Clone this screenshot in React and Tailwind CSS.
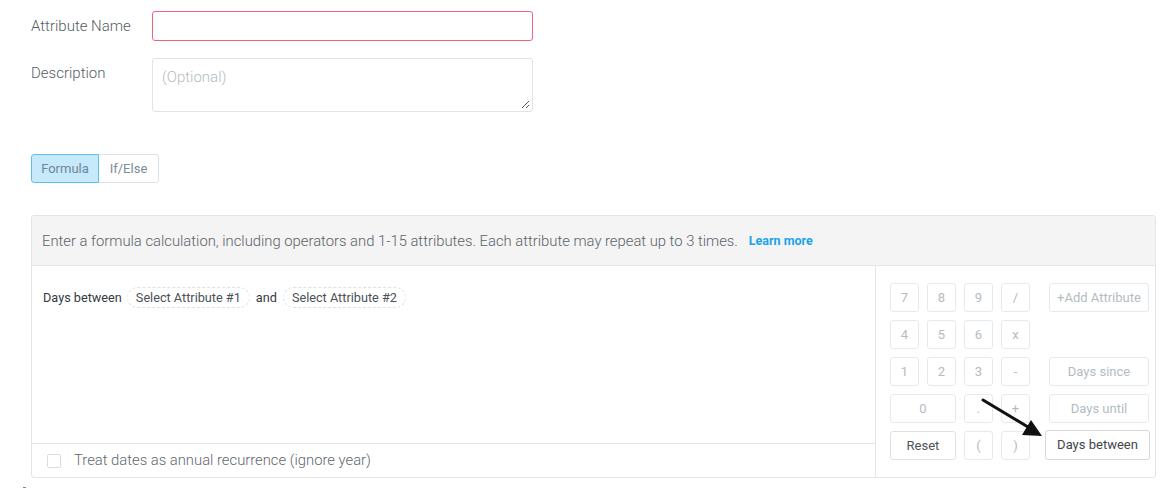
import React from "react";

const Key = ({ children, className = "", tone = "text-[#b4bcc2] border-[#e6eaec]" }) => (
  <div
    className={`h-[29px] flex items-center justify-center border rounded-[3px] text-[13px] ${tone} ${className}`}
  >
    {children}
  </div>
);

export default function App() {
  return (
    <div
      className="relative w-[1173px] h-[490px] bg-white overflow-hidden"
      style={{ fontFamily: "Roboto, 'Liberation Sans', sans-serif" }}
    >
      <div className="pl-[31px] pt-[11px]">
        {/* Attribute name */}
        <div className="flex items-center">
          <div className="w-[121px] text-[15px] font-light text-[#555d63]">Attribute Name</div>
          <div className="w-[381px] h-[30px] border border-[#f2627e] rounded-[3px]" />
        </div>
        {/* Description */}
        <div className="flex items-start mt-[17px]">
          <div className="w-[121px] text-[15px] font-light text-[#555d63] pt-[4px]">Description</div>
          <div className="relative w-[381px] h-[54px] border border-[#dfe4e6] rounded-[3px] px-[9px] pt-[7px] text-[15px] font-light text-[#b3bcc2]">
            (Optional)
            <svg className="absolute right-[2px] bottom-[2px]" width="9" height="9" viewBox="0 0 9 9">
              <path d="M8 1 L1 8 M8 5 L5 8" stroke="#555" strokeWidth="1" />
            </svg>
          </div>
        </div>
        {/* Tabs */}
        <div className="flex mt-[42px]">
          <div className="w-[68px] h-[29px] flex items-center justify-center bg-[#c6e9fc] border border-[#5ec0f2] rounded-l-[3px] text-[13px] text-[#6f8797]">
            Formula
          </div>
          <div className="w-[60px] h-[29px] flex items-center justify-center border border-l-0 border-[#dde4e8] rounded-r-[3px] text-[13px] text-[#7c8c98]">
            If/Else
          </div>
        </div>
        {/* Panel */}
        <div className="mt-[32px] w-[1125px] border border-[#e1e5e7] rounded-[3px]">
          <div className="h-[50px] bg-[#f4f4f4] border-b border-[#e1e5e7] flex items-center pl-[10px] pt-[1px]">
            <span className="text-[14.8px] font-light text-[#5a6369]">
              Enter a formula calculation, including operators and 1-15 attributes. Each attribute may repeat up to 3 times.
            </span>
            <span className="ml-[11px] text-[12.5px] font-bold text-[#1ca3ea]">Learn more</span>
          </div>
          <div className="flex h-[211px]">
            <div className="flex-1 flex flex-col">
              <div className="flex-1 flex items-start pl-[11px] pt-[22px] text-[12.7px] text-[#333a40]">
                <span>Days between</span>
                <span className="ml-[5px] -mt-[1px] px-[8px] h-[21px] flex items-center border border-dashed border-[#dde2e5] rounded-full text-[#4a5157]">
                  Select Attribute #1
                </span>
                <span className="ml-[6px]">and</span>
                <span className="ml-[6px] -mt-[1px] px-[8px] h-[21px] flex items-center border border-dashed border-[#dde2e5] rounded-full text-[#4a5157]">
                  Select Attribute #2
                </span>
              </div>
              <div className="h-[34px] border-t border-[#e1e5e7] flex items-center pl-[15px]">
                <div className="w-[14px] h-[14px] border border-[#d8dde0] rounded-[2px]" />
                <span className="ml-[13px] text-[14.8px] font-light text-[#5f686e]">
                  Treat dates as annual recurrence (ignore year)
                </span>
              </div>
            </div>
            <div className="w-[280px] border-l border-[#e1e5e7] pl-[14px] pt-[17px] flex">
              <div className="grid grid-cols-[29px_29px_29px_29px] gap-[8px] auto-rows-[29px]">
                <Key>7</Key>
                <Key>8</Key>
                <Key>9</Key>
                <Key>/</Key>
                <Key>4</Key>
                <Key>5</Key>
                <Key>6</Key>
                <Key>x</Key>
                <Key>1</Key>
                <Key>2</Key>
                <Key>3</Key>
                <Key>-</Key>
                <Key className="col-span-2">0</Key>
                <Key>.</Key>
                <Key>+</Key>
                <Key className="col-span-2" tone="text-[#4c545a] border-[#dde2e5]">Reset</Key>
                <Key>(</Key>
                <Key>)</Key>
              </div>
              <div className="ml-[19px] flex flex-col gap-[8px]">
                <Key className="w-[100px]">+Add Attribute</Key>
                <div className="h-[29px]" />
                <Key className="w-[100px]">Days since</Key>
                <Key className="w-[100px]">Days until</Key>
                <div className="-ml-[4px] -mt-[1px] w-[105px] h-[30px] flex items-center justify-center border border-[#d3d9dd] rounded-[3px] text-[13px] text-[#3e464c]">
                  Days between
                </div>
              </div>
            </div>
          </div>
        </div>
      </div>
      {/* Arrow annotation */}
      <svg className="absolute left-0 top-0 pointer-events-none" width="1173" height="490">
        <line x1="983" y1="400" x2="1028" y2="427" stroke="#111" strokeWidth="3" strokeLinecap="round" />
        <polygon points="1042,436 1022,435 1031,420" fill="#111" />
      </svg>
      <div className="absolute left-[23px] top-[487px] w-[3px] h-[1px] bg-[#888]" />
    </div>
  );
}
